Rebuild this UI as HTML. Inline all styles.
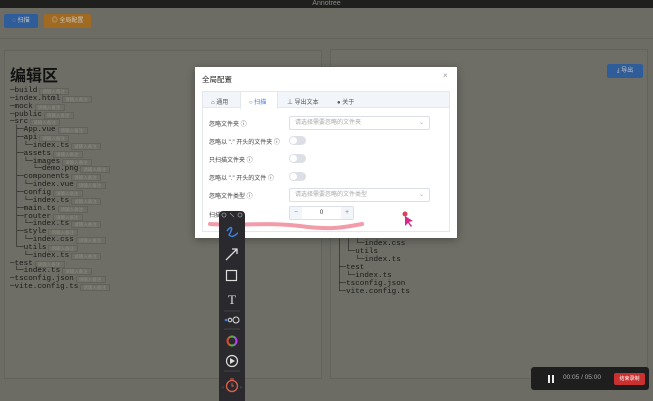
<!DOCTYPE html>
<html><head><meta charset="utf-8"><style>
*{margin:0;padding:0;box-sizing:border-box}
body{width:653px;height:401px;overflow:hidden;background:#6c6c64;font-family:"Liberation Sans","Noto Sans CJK SC",sans-serif;position:relative}
.abs{position:absolute}
.top{left:0;top:0;width:653px;height:8px;background:#1f1f1d;color:#888;font-size:7px;text-align:center;line-height:8px}
.btn{top:14px;height:14px;border-radius:2px;color:#c8c8c0;font-size:6px;line-height:14px;text-align:center}
.panel{border:1px solid #63635c;background:#6e6e66}
.tree{left:10px;top:88px;font-family:"Liberation Mono",monospace;font-size:7.6px;line-height:7.84px;color:#1a1a18;white-space:pre}
.tree span.n{display:inline-block;border:1px solid #62625b;font-family:"Liberation Sans","Noto Sans CJK SC",sans-serif;font-size:4.5px;color:#8a8a82;width:30px;height:7px;line-height:6px;padding-left:2px;vertical-align:top;margin-left:2px}
.modal{left:195px;top:67px;width:262px;height:171px;background:#fff;box-shadow:0 2px 8px rgba(0,0,0,.3)}
.lbl{font-size:6px;color:#444;left:209px}
.sel{left:289px;width:141px;height:14px;border:1px solid #dcdfe6;border-radius:2px;font-size:6px;color:#aaa;line-height:12px;padding-left:5px}
.tog{left:289px;width:17px;height:9px;border-radius:5px;background:#dcdfe6}
.tog:after{content:"";position:absolute;left:1px;top:1px;width:7px;height:7px;border-radius:50%;background:#fff}
.tb{left:219px;top:211px;width:26px;height:190px;background:#2a292d;border-radius:4px 4px 0 0}
</style></head><body>
<div class="abs top">Annotree</div>
<div class="abs btn" style="left:4px;width:34px;background:#2f5d9a">◌ 扫描</div>
<div class="abs btn" style="left:44px;width:47px;background:#a06a22">◎ 全局配置</div>
<div class="abs" style="left:0;top:38px;width:653px;height:1px;background:#62625b"></div>
<div class="abs panel" style="left:4px;top:50px;width:318px;height:329px"></div>
<div class="abs panel" style="left:330px;top:49px;width:318px;height:330px"></div>
<div class="abs" style="left:10px;top:62px;font-size:16px;font-weight:bold;color:#111">编辑区</div>
<div class="abs" style="left:337px;top:62px;font-size:16px;font-weight:bold;color:#111">预览区</div>
<div class="abs btn" style="left:607px;top:64px;width:36px;background:#2f5d9a">⤓ 导出</div>
<div class="abs tree">─build<span class="n">请输入备注</span>
─index.html<span class="n">请输入备注</span>
─mock<span class="n">请输入备注</span>
─public<span class="n">请输入备注</span>
─src<span class="n">请输入备注</span>
 ├─App.vue<span class="n">请输入备注</span>
 ├─api<span class="n">请输入备注</span>
 │ └─index.ts<span class="n">请输入备注</span>
 ├─assets<span class="n">请输入备注</span>
 │ └─images<span class="n">请输入备注</span>
 │   └─demo.png<span class="n">请输入备注</span>
 ├─components<span class="n">请输入备注</span>
 │ └─index.vue<span class="n">请输入备注</span>
 ├─config<span class="n">请输入备注</span>
 │ └─index.ts<span class="n">请输入备注</span>
 ├─main.ts<span class="n">请输入备注</span>
 ├─router<span class="n">请输入备注</span>
 │ └─index.ts<span class="n">请输入备注</span>
 ├─style<span class="n">请输入备注</span>
 │ └─index.css<span class="n">请输入备注</span>
 └─utils<span class="n">请输入备注</span>
   └─index.ts<span class="n">请输入备注</span>
─test<span class="n">请输入备注</span>
 └─index.ts<span class="n">请输入备注</span>
─tsconfig.json<span class="n">请输入备注</span>
─vite.config.ts<span class="n">请输入备注</span></div>
<div class="abs tree" style="left:337px;top:240px;line-height:8px">│ │ └─index.css
│ └─utils
│   └─index.ts
├─test
│ └─index.ts
├─tsconfig.json
└─vite.config.ts</div>
<div class="abs modal"></div>
<div class="abs" style="left:202px;top:74px;font-size:7.5px;color:#222">全局配置</div>
<div class="abs" style="left:443px;top:71px;font-size:8px;color:#999">×</div>
<div class="abs" style="left:202px;top:91px;width:248px;height:141px;border:1px solid #e4e7ed"></div>
<div class="abs" style="left:203px;top:92px;width:246px;height:16px;background:#f2f5fa;border-bottom:1px solid #e4e7ed"></div>
<div class="abs" style="left:240px;top:92px;width:38px;height:17px;background:#fff;border-left:1px solid #e4e7ed;border-right:1px solid #e4e7ed"></div>
<div class="abs" style="left:211px;top:97px;font-size:6px;color:#555">⌂ 通用</div>
<div class="abs" style="left:249px;top:97px;font-size:6px;color:#3b7be0">○ 扫描</div>
<div class="abs" style="left:287px;top:97px;font-size:6px;color:#555">⊥ 导出文本</div>
<div class="abs" style="left:337px;top:97px;font-size:6px;color:#555">● 关于</div>
<div class="abs lbl" style="top:119px">忽略文件夹 ⓘ</div>
<div class="abs sel" style="top:116px">请选择需要忽略的文件夹<span style="float:right;margin-right:5px">⌄</span></div>
<div class="abs lbl" style="top:137px">忽略以 "." 开头的文件夹 ⓘ</div>
<div class="abs tog" style="top:136px"></div>
<div class="abs lbl" style="top:155px">只扫描文件夹 ⓘ</div>
<div class="abs tog" style="top:154px"></div>
<div class="abs lbl" style="top:173px">忽略以 "." 开头的文件 ⓘ</div>
<div class="abs tog" style="top:172px"></div>
<div class="abs lbl" style="top:191px">忽略文件类型 ⓘ</div>
<div class="abs sel" style="top:188px">请选择需要忽略的文件类型<span style="float:right;margin-right:5px">⌄</span></div>
<div class="abs lbl" style="top:210px">扫描深度</div>
<div class="abs" style="left:289px;top:206px;width:65px;height:14px;border:1px solid #dcdfe6;border-radius:2px;font-size:6px;color:#333;text-align:center;line-height:12px">0</div>
<div class="abs" style="left:290px;top:207px;width:12px;height:12px;background:#f2f5fa;font-size:7px;color:#888;text-align:center;line-height:12px">−</div>
<div class="abs" style="left:341px;top:207px;width:12px;height:12px;background:#f2f5fa;font-size:7px;color:#888;text-align:center;line-height:12px">+</div>
<svg class="abs" style="left:0;top:0" width="653" height="401">
<path d="M210 224 C240 226 270 222 300 226 S340 228 362 224" stroke="#f08a9a" stroke-width="4" fill="none" stroke-linecap="round" opacity=".85"/>
<circle cx="405" cy="214" r="2.5" fill="#e0405a"/>
<path d="M405 216 L405 226 L408 223 L411 227 L412 226 L409 222 L413 221 Z" fill="#d02a8a"/>
</svg>
<div class="abs tb"></div>
<svg class="abs" style="left:219px;top:211px" width="26" height="190">
<g fill="none" stroke="#999" stroke-width=".8"><circle cx="5" cy="4" r="2"/><circle cx="21" cy="4" r="2"/><path d="M11 2 L15 6"/></g>
<path d="M8 20 C12 14 15 16 10 24 C14 28 18 22 19 22" stroke="#3b82e0" stroke-width="1.5" fill="none"/>
<path d="M7 49 L18 38 M13 38 H18 V43" stroke="#ddd" stroke-width="1.3" fill="none"/>
<rect x="7.5" y="59.5" width="10" height="10" stroke="#ddd" stroke-width="1.2" fill="none"/>
<text x="13" y="93" text-anchor="middle" fill="#ddd" font-size="13" font-family="Liberation Serif">T</text>
<line x1="5" y1="100" x2="21" y2="100" stroke="#444"/>
<circle cx="7" cy="109" r="1.3" fill="#3b82e0"/><circle cx="11" cy="109" r="1.8" stroke="#ddd" fill="none"/><circle cx="17" cy="109" r="3" stroke="#ddd" fill="none"/>
<line x1="5" y1="118" x2="21" y2="118" stroke="#444"/>
<circle cx="13" cy="130" r="4.5" fill="none" stroke="url(#g)" stroke-width="2"/>
<defs><linearGradient id="g"><stop offset="0" stop-color="#f33"/><stop offset=".5" stop-color="#3c3"/><stop offset="1" stop-color="#c3f"/></linearGradient></defs>
<circle cx="13" cy="150" r="5.5" stroke="#ddd" stroke-width="1.2" fill="none"/><path d="M11 147 L16 150 L11 153Z" fill="#ddd"/>
<line x1="5" y1="160" x2="21" y2="160" stroke="#444"/>
<circle cx="13" cy="175" r="5.5" stroke="#e2604a" stroke-width="1.3" fill="none"/><path d="M13 172 V175 H15 M11 168 H15" stroke="#e2604a" fill="none"/>
<text x="3" y="178" fill="#666" font-size="6">‹</text><text x="21" y="178" fill="#666" font-size="6">›</text>
</svg>
<div class="abs" style="left:531px;top:367px;width:118px;height:23px;background:#1e1e1e;border-radius:3px"></div>
<div class="abs" style="left:548px;top:375px;width:2px;height:8px;background:#eee"></div>
<div class="abs" style="left:552px;top:375px;width:2px;height:8px;background:#eee"></div>
<div class="abs" style="left:563px;top:374px;font-size:6.5px;color:#aaa">00:05 / 05:00</div>
<div class="abs" style="left:614px;top:373px;width:31px;height:12px;background:#c93030;border-radius:2px;font-size:5px;color:#fff;text-align:center;line-height:12px">结束录制</div>
</body></html>
